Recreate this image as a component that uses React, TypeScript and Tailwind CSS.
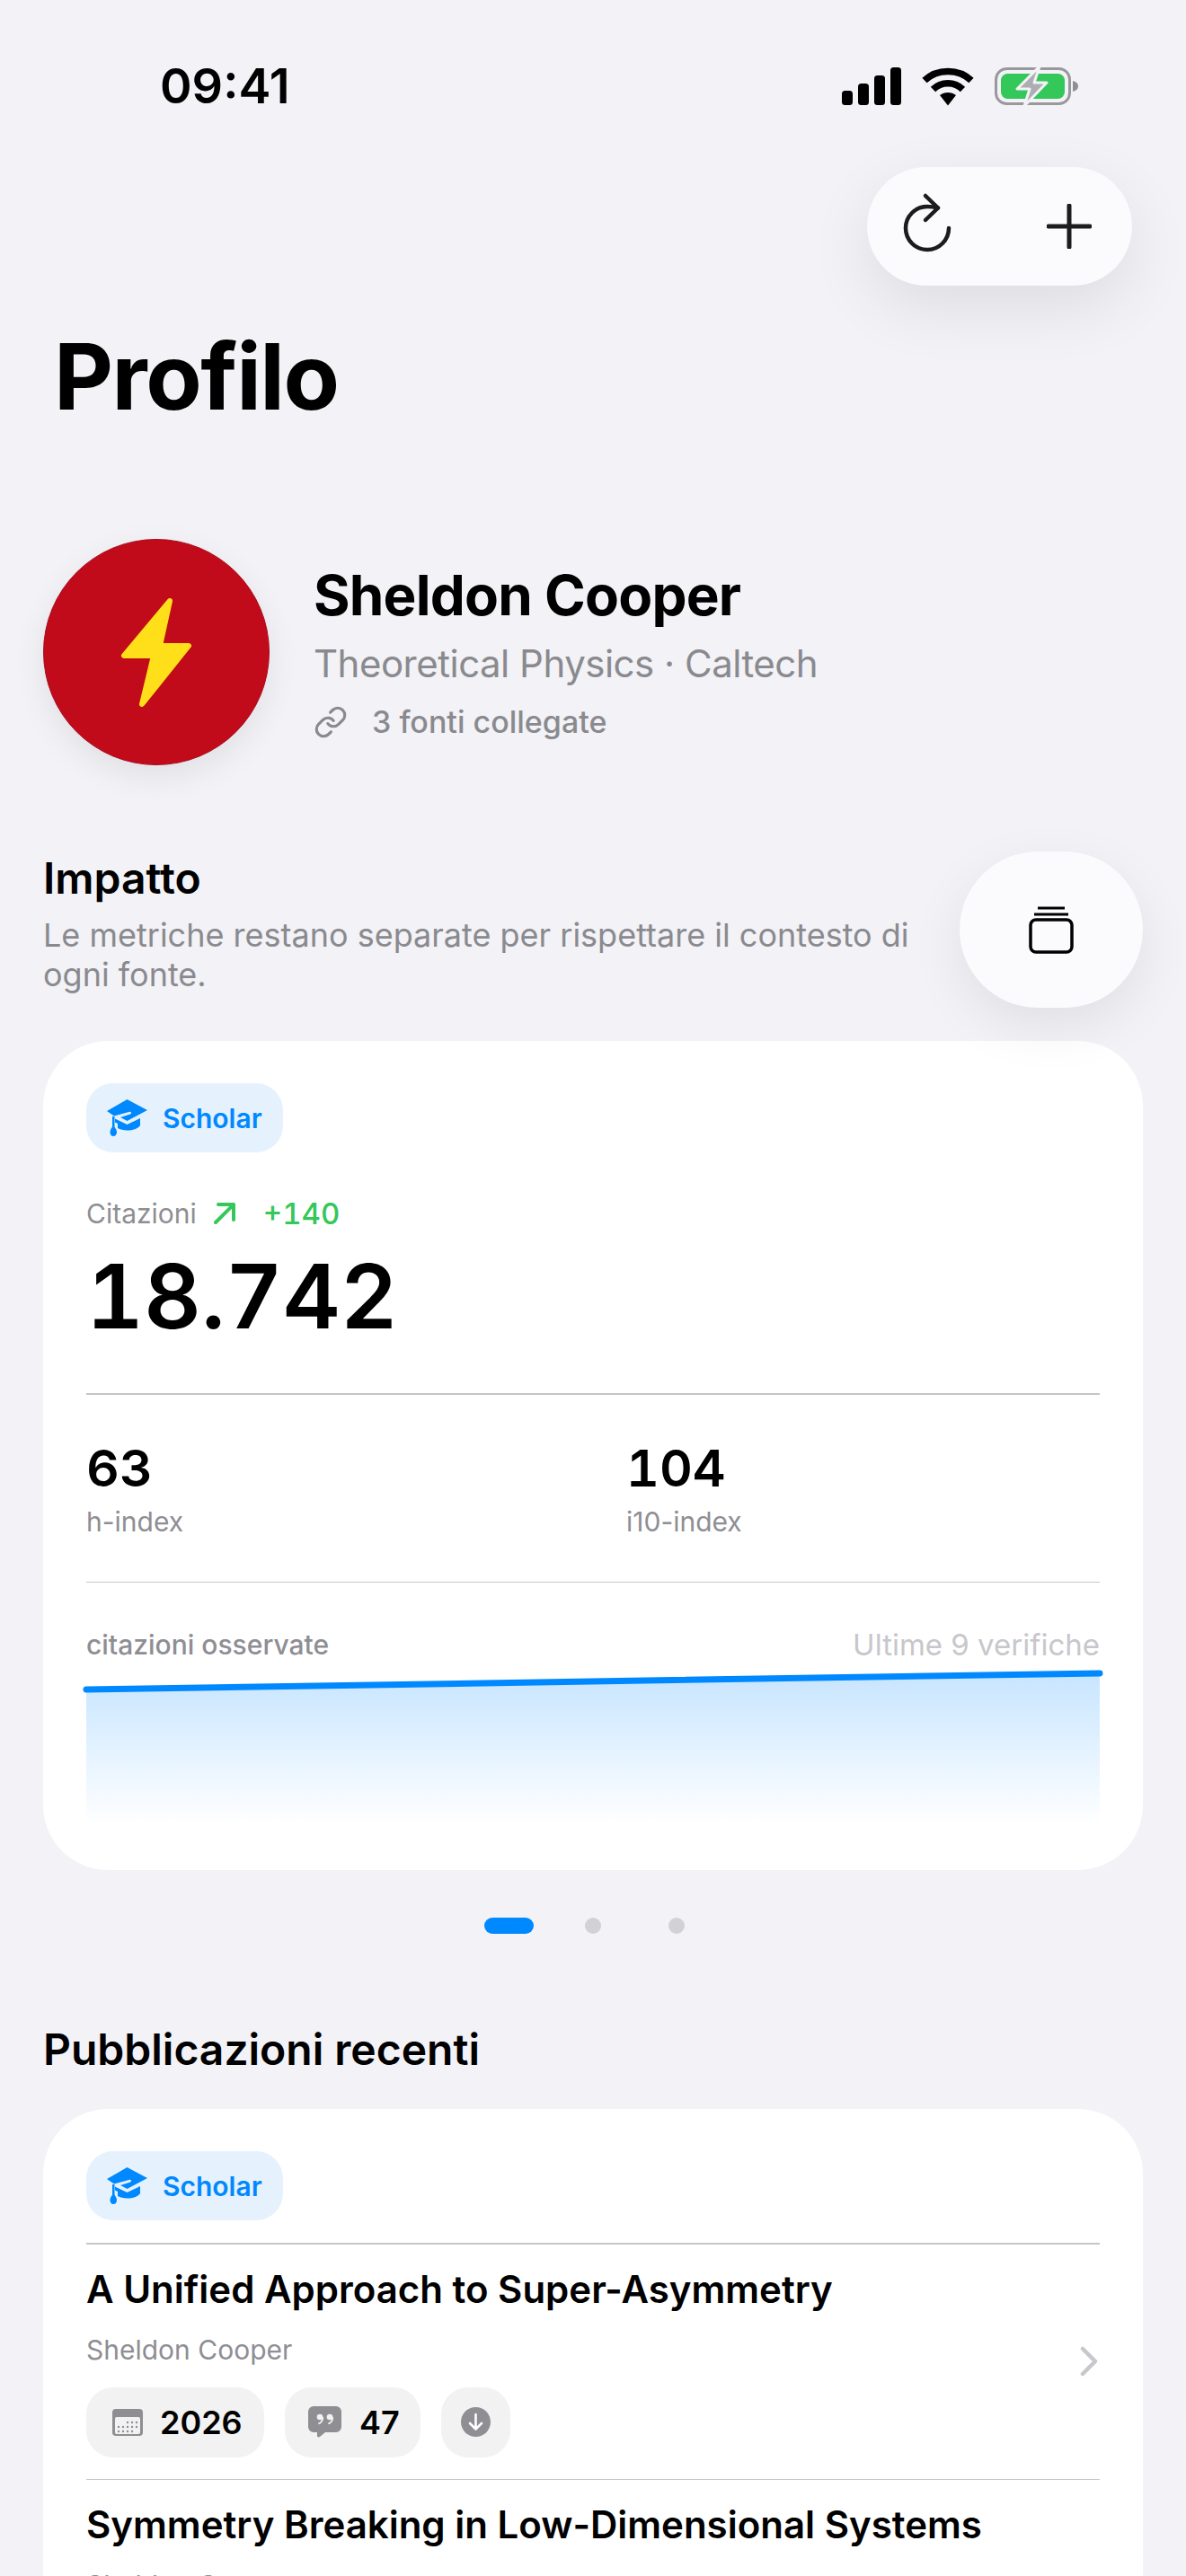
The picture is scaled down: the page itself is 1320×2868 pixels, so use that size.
import type { ReactNode } from 'react';
import { Link } from 'lucide-react';

function SignalIcon() {
  return (
    <svg width="66" height="42" viewBox="0 0 66 42" fill="#000">
      <rect x="0" y="26" width="12" height="16" rx="3.5" />
      <rect x="18" y="18" width="12" height="24" rx="3.5" />
      <rect x="36" y="9" width="12" height="33" rx="3.5" />
      <rect x="54" y="0" width="12" height="42" rx="3.5" />
    </svg>
  );
}

function WifiIcon() {
  return (
    <svg width="58" height="43" viewBox="0 0 58 43" fill="none" stroke="#000" strokeWidth="7.5">
      <path d="M3 14.5C17 1 41 1 55 14.5" />
      <path d="M12.5 24.5C21.5 15.5 36.5 15.5 45.5 24.5" />
      <path d="M20 31C25 27 33 27 38 31L29 42.5Z" fill="#000" stroke="none" />
    </svg>
  );
}

function BatteryIcon() {
  return (
    <svg width="94" height="46" viewBox="0 0 94 46">
      <rect x="1.5" y="3.5" width="82" height="39" rx="12" fill="none" stroke="#98989d" strokeWidth="3" />
      <rect x="7" y="9" width="71" height="28" rx="7.5" fill="#34c759" />
      <path d="M87 17c4 1 6 3 6 6s-2 5-6 6z" fill="#8e8e93" />
      <path d="M50 1 25 26h14l-6 19 25-26H44z" fill="#aeaeb2" stroke="#f2f2f7" strokeWidth="3" strokeLinejoin="round" />
    </svg>
  );
}

function ReloadIcon() {
  return (
    <svg width="64" height="72" viewBox="0 0 64 72" fill="none" stroke="#1c1c1e" strokeWidth="4.5" strokeLinecap="round" strokeLinejoin="round" className="overflow-visible">
      <path d="M56 38A24 24 0 1 1 32 14C36 14 40 14.5 44 15.5" />
      <path d="M30 2 44 15.5 30 29" />
    </svg>
  );
}

function PlusIcon() {
  return (
    <svg width="50" height="50" viewBox="0 0 50 50" fill="none" stroke="#1c1c1e" strokeWidth="5" strokeLinecap="round">
      <path d="M25 2v46M2 25h46" />
    </svg>
  );
}

function StackIcon() {
  return (
    <svg width="50" height="54" viewBox="0 0 50 54" fill="none" stroke="#000">
      <path d="M10 3h30" strokeWidth="3" />
      <path d="M6 10h38" strokeWidth="3" />
      <rect x="2" y="16" width="46" height="36" rx="6" strokeWidth="3.5" />
    </svg>
  );
}

function BoltIcon() {
  return (
    <svg width="80" height="124" viewBox="0 0 80 124" fill="#ffde1a" stroke="#ffde1a" strokeWidth="6" strokeLinejoin="round">
      <path d="M55 5 4 66H37L24 120 76 55H44Z" />
    </svg>
  );
}

function CapIcon() {
  return (
    <svg width="45" height="41" viewBox="0 0 45 41">
      <path d="M22.5 0 45 12 22.5 24 15 20l11-3.5c2-1 1-3.5-1.500-2.500L8 18.500 0 13Z" fill="#0088ff" />
      <path d="M9 21.500 22.500 28 37 21v8c-3 4-8 5.500-14.500 5.500-4 0-8-1-10.500-2.500V27l-3-1.500z" fill="#0088ff" />
      <rect x="6" y="19" width="2.500" height="13" fill="#0088ff" />
      <path d="M7.200 29.500c2 2 3.800 4 3.800 7 0 2.500-1.500 4.500-3.800 4.500s-3.700-2-3.700-4.500c0-3 1.700-5 3.700-7z" fill="#0088ff" />
    </svg>
  );
}

function ArrowIcon() {
  return (
    <svg width="26" height="26" viewBox="0 0 26 26" fill="none" stroke="#34c759" strokeWidth="4" strokeLinecap="round" strokeLinejoin="round">
      <path d="M3 23 23 3M6 3h17v17" />
    </svg>
  );
}

function CalendarIcon() {
  const dots = [
    [17, 15], [22, 15], [27, 15],
    [7, 20], [12, 20], [17, 20], [22, 20], [27, 20],
    [7, 25], [12, 25], [17, 25], [22, 25],
  ];
  return (
    <svg width="34" height="30" viewBox="0 0 34 30">
      <rect width="34" height="30" rx="4" fill="#8e8e93" />
      <rect x="3" y="9" width="28" height="19" rx="2" fill="#f2f2f2" />
      {dots.map(([x, y]) => (
        <circle key={`${x}-${y}`} cx={x} cy={y} r="1.200" fill="#8e8e93" />
      ))}
    </svg>
  );
}

function QuoteIcon() {
  return (
    <svg width="37" height="35" viewBox="0 0 37 35">
      <path d="M6 0h25a6 6 0 0 1 6 6v17a6 6 0 0 1-6 6H19l-6 5c-1 .800-3 .500-3-1v-4H6a6 6 0 0 1-6-6V6a6 6 0 0 1 6-6z" fill="#8e8e93" />
      <circle cx="13" cy="12" r="3.300" fill="#f2f2f2" />
      <path d="M16.300 12c0 4-2 6.500-5 7.500" fill="none" stroke="#f2f2f2" strokeWidth="1.800" />
      <circle cx="24" cy="12" r="3.300" fill="#f2f2f2" />
      <path d="M27.300 12c0 4-2 6.500-5 7.500" fill="none" stroke="#f2f2f2" strokeWidth="1.800" />
    </svg>
  );
}

function DownloadIcon() {
  return (
    <svg width="33" height="33" viewBox="0 0 33 33">
      <circle cx="16.500" cy="16.500" r="16.500" fill="#8e8e93" />
      <path d="M16.500 8v16M10 18l6.500 6.500L23 18" fill="none" stroke="#fff" strokeWidth="2.600" strokeLinecap="round" strokeLinejoin="round" />
    </svg>
  );
}

function ChevronIcon() {
  return (
    <svg width="20" height="34" viewBox="0 0 20 34" fill="none" stroke="#c7c7cc" strokeWidth="4.500" strokeLinecap="round" strokeLinejoin="round">
      <path d="M3 3l14 14L3 31" />
    </svg>
  );
}

function ScholarBadge() {
  return (
    <div className="flex h-[77px] w-[219px] items-center gap-[17px] rounded-[30px] bg-[#e5f2fe] pl-[23px]">
      <CapIcon />
      <span className="text-[30px] font-semibold leading-[40px] text-[#0088ff]">Scholar</span>
    </div>
  );
}

function Divider() {
  return <div className="h-[1.500px] bg-[#c6c6c8]" />;
}

function Chip({ icon, label, className }: { icon: ReactNode; label?: string; className: string }) {
  return (
    <div className={`flex h-[78px] items-center rounded-[30px] bg-[#f2f2f2] ${className}`}>
      {icon}
      {label && <span className="text-[36px] font-semibold leading-[48px] text-black">{label}</span>}
    </div>
  );
}

function PublicationRow({ title, year, cites }: { title: string; year: string; cites: string }) {
  return (
    <div className="flex items-center justify-between pr-[2px]">
      <div>
        <div className="mt-[23px] text-[42px] font-semibold leading-[54px] text-black">{title}</div>
        <div className="mt-[20px] text-[30px] leading-[40px] text-[#8e8e93]">Sheldon Cooper</div>
        <div className="mt-[22px] flex gap-[23px]">
          <Chip icon={<CalendarIcon />} label={year} className="w-[198px] gap-[19px] pl-[29px]" />
          <Chip icon={<QuoteIcon />} label={cites} className="w-[151px] gap-[20px] pl-[26px]" />
          <Chip icon={<DownloadIcon />} className="w-[77px] justify-center" />
        </div>
        <div className="h-[24px]" />
      </div>
      <ChevronIcon />
    </div>
  );
}

export default function App() {
  return (
    <div className="h-[2868px] w-[1320px] overflow-hidden bg-[#f2f2f7] font-[Inter,sans-serif] text-black">
      <div className="flex h-[44px] translate-y-[74px] items-center justify-between pl-[178px] pr-[119px]">
        <span className="text-[54px] font-semibold leading-[44px]">09:41</span>
        <div className="flex items-center gap-[23px]">
          <SignalIcon />
          <WifiIcon />
          <BatteryIcon />
        </div>
      </div>

      <div className="mt-[142px] flex justify-end pr-[60px]">
        <div className="flex h-[132px] w-[295px] items-center justify-between rounded-full bg-[#fbfbfe] pl-[35px] pr-[45px] shadow-[0_24px_72px_rgba(0,0,0,0.09)]">
          <ReloadIcon />
          <PlusIcon />
        </div>
      </div>

      <h1 className="mt-[50px] pl-[60px] text-[102px] font-bold leading-[102px] tracking-[-1.5px]">Profilo</h1>

      <section className="mt-[130px] flex items-center gap-[49px] pl-[48px]">
        <div className="flex h-[252px] w-[252px] items-center justify-center rounded-full border border-[#a90c1c] bg-[#c10a1a] shadow-[0_12px_36px_rgba(0,0,0,0.08)]">
          <BoltIcon />
        </div>
        <div className="pb-[2px]">
          <div className="text-[62px] font-bold leading-[76px] tracking-[-0.8px]">Sheldon Cooper</div>
          <div className="mt-[11px] text-[42px] leading-[54px] tracking-[-0.5px] text-[#8a8a8e]">Theoretical Physics · Caltech</div>
          <div className="mt-[16px] flex items-center gap-[27px] text-[34px] font-medium leading-[44px] text-[#8a8a8e]">
            <Link size={38} strokeWidth={2} />
            <span>3 fonti collegate</span>
          </div>
        </div>
      </section>

      <section className="mt-[96px] flex items-start justify-between px-[48px]">
        <div className="w-[1000px]">
          <h2 className="text-[48px] font-semibold leading-[60px]">Impatto</h2>
          <p className="mt-[11px] text-[36px] leading-[44px] text-[#8a8a8e]">
            Le metriche restano separate per rispettare il contesto di ogni fonte.
          </p>
        </div>
        <div className="flex h-[174px] w-[204px] items-center justify-center rounded-full bg-[#fbfbfd] shadow-[0_20px_60px_rgba(0,0,0,0.08)]">
          <StackIcon />
        </div>
      </section>

      <section className="mx-[48px] mt-[37px] h-[923px] rounded-[72px] bg-white px-[48px] pt-[47px]">
        <ScholarBadge />
        <div className="mt-[48px] flex h-[40px] items-center">
          <span className="text-[30px] leading-[40px] text-[#8e8e93]">Citazioni</span>
          <span className="ml-[18px]"><ArrowIcon /></span>
          <span className="ml-[30px] text-[33px] font-medium leading-[40px] tabular-nums text-[#34c759]">+140</span>
        </div>
        <div className="mt-[20px] text-[99px] font-semibold leading-[104px] tabular-nums">18.742</div>
        <div className="mt-[56px]"><Divider /></div>
        <div className="mt-[47px] grid grid-cols-[601px_1fr]">
          <div>
            <div className="text-[57px] font-semibold leading-[70px] tabular-nums">63</div>
            <div className="mt-[4px] text-[30px] leading-[40px] text-[#8e8e93]">h-index</div>
          </div>
          <div>
            <div className="text-[57px] font-semibold leading-[70px] tabular-nums">104</div>
            <div className="mt-[4px] text-[30px] leading-[40px] text-[#8e8e93]">i10-index</div>
          </div>
        </div>
        <div className="mt-[47px]"><Divider /></div>
        <div className="mt-[47px] flex h-[44px] items-center justify-between">
          <span className="text-[30px] font-medium leading-[40px] text-[#8e8e93]">citazioni osservate</span>
          <span className="text-[33px] leading-[44px] text-[#c7c7cc]">Ultime 9 verifiche</span>
        </div>
        <svg width="1128" height="172" viewBox="0 0 1128 172" className="mt-[6px] overflow-visible">
          <defs>
            <linearGradient id="areaFill" x1="0" y1="0" x2="0" y2="1">
              <stop offset="0" stopColor="#0088ff" stopOpacity="0.22" />
              <stop offset="1" stopColor="#0088ff" stopOpacity="0" />
            </linearGradient>
          </defs>
          <path d="M0 22 1128 4V172H0Z" fill="url(#areaFill)" />
          <path d="M0 22 1128 4" fill="none" stroke="#0088ff" strokeWidth="7" strokeLinecap="round" />
        </svg>
      </section>

      <div className="mt-[53px] flex items-center pl-[539px]">
        <div className="h-[18px] w-[55px] rounded-full bg-[#0088ff]" />
        <div className="ml-[57px] h-[18px] w-[18px] rounded-full bg-[#d1d1d6]" />
        <div className="ml-[75px] h-[18px] w-[18px] rounded-full bg-[#d1d1d6]" />
      </div>

      <h2 className="mt-[99px] pl-[48px] text-[48px] font-semibold leading-[60px]">Pubblicazioni recenti</h2>

      <section className="mx-[48px] mt-[36px] rounded-[72px] bg-white px-[48px] pt-[47px]">
        <ScholarBadge />
        <div className="mt-[25px]"><Divider /></div>
        <PublicationRow title="A Unified Approach to Super-Asymmetry" year="2026" cites="47" />
        <Divider />
        <PublicationRow title="Symmetry Breaking in Low-Dimensional Systems" year="2025" cites="31" />
      </section>
    </div>
  );
}
